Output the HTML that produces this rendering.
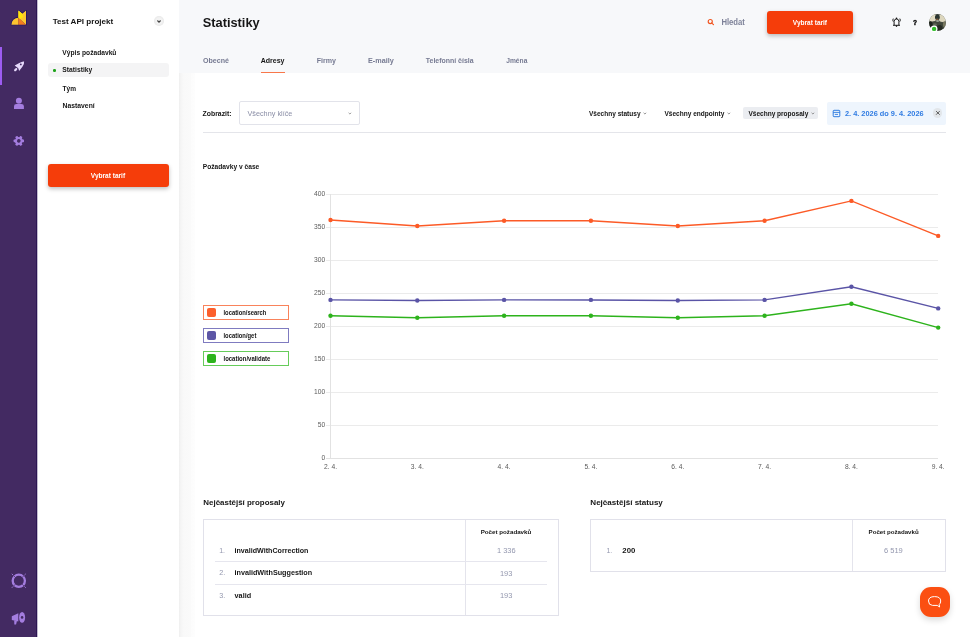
<!DOCTYPE html>
<html><head><meta charset="utf-8">
<style>
*{box-sizing:border-box;margin:0;padding:0}
html,body{width:970px;height:637px;overflow:hidden;background:#fff;font-family:"Liberation Sans",sans-serif;color:#111}
.a{position:absolute;white-space:nowrap;line-height:1}
#sb{position:absolute;left:0;top:0;width:37px;height:637px;background:#432a62}
#panel{position:absolute;left:37px;top:0;width:142px;height:637px;background:#fff}
#hdr{position:absolute;left:179px;top:0;width:791px;height:73px;background:#f7f8fa}
#main{position:absolute;left:179px;top:73px;width:791px;height:564px;background:#fff}
#shd{position:absolute;left:179px;top:73px;width:16px;height:564px;background:linear-gradient(to right,#eeeeee 0,#f3f3f3 6%,#f7f7f7 20%,#f9f9f9 30%,#fafafa 75%,#fcfcfc 76%,#fdfdfd 99%,#fff 100%)}
.chv{position:absolute;width:4px;height:3px}
.leg{position:absolute;left:203px;width:86px;height:14.5px;border:1px solid}
.leg i{position:absolute;left:2.5px;top:2px;width:9px;height:9px;border-radius:2px}
.tbl{position:absolute;border:1px solid #e1e1ea;background:#fff}
</style></head><body>
<div id="sb"></div>
<div id="panel"></div>
<div class="a" style="left:36px;top:0;width:1px;height:637px;background:#2c1553"></div>
<div class="a" style="left:37px;top:0;width:1px;height:637px;background:#c4bccf"></div>
<div id="hdr"></div>
<div id="main"></div>
<div id="shd"></div>

<!-- sidebar -->
<div class="a" style="left:0;top:47px;width:2px;height:38px;background:#9d5cf2"></div>
<svg class="a" style="left:0;top:0" width="37" height="637" viewBox="0 0 37 637">
  <!-- logo -->
  <path d="M11.4 24.7 A7 7 0 0 1 18.4 17.7 L18.4 10.6 L22.3 13.8 L26 10.6 L26 24.7 Z" fill="none" stroke="#1c1160" stroke-width="1.3" stroke-linejoin="round"/>
  <path d="M11.4 24.7 A7 7 0 0 1 18.4 17.7 L18.4 24.7 Z" fill="#fdc430"/>
  <path d="M18.4 17.7 L18.4 10.6 L22.3 13.8 L26 10.6 L26 24.7 Z" fill="#fcc82e"/>
  <path d="M18.4 17.7 L18.4 10.6 L22.3 13.8 L23.2 17 L20 19.2 Z" fill="#ffe60a"/>
  <path d="M18.4 17.7 L26 24.7 L18.4 24.7 Z" fill="#f47d1f"/>
  <!-- rocket -->
  <path d="M14.7 65.5 L19.3 62.9 Q22.6 61 24.1 61.5 Q24.6 63.1 22.4 66.7 L19.1 71 L18.4 68.6 Q17.8 67.8 16.9 67.3 Z" fill="#e6d9fb"/>
  <ellipse cx="15.7" cy="69.6" rx="2" ry="1.15" transform="rotate(-45 15.7 69.6)" fill="#e6d9fb"/>
  <circle cx="20.8" cy="64.4" r="0.95" fill="#432a62"/>
  <!-- person -->
  <circle cx="18.9" cy="100.7" r="3" fill="#a47ddf"/>
  <path d="M14 108.9 L14 106.2 Q14 104 16.5 104 L21.4 104 Q23.9 104 23.9 106.2 L23.9 108.9 Z" fill="#a47ddf"/>
  <!-- gear -->
  <g transform="translate(18.8 140.9) rotate(30)" fill="#a47ddf">
    <circle r="3.8"/>
    <rect x="-1.3" y="-5.2" width="2.6" height="10.4" rx="0.6"/>
    <rect x="-1.3" y="-5.2" width="2.6" height="10.4" rx="0.6" transform="rotate(60)"/>
    <rect x="-1.3" y="-5.2" width="2.6" height="10.4" rx="0.6" transform="rotate(120)"/>
    <circle r="1.8" fill="#432a62"/>
  </g>
  <!-- lifebuoy -->
  <g transform="translate(18.8 580.8)">
    <circle r="6.1" fill="none" stroke="#a47ddf" stroke-width="2.3"/>
    <path d="M-5.9 -5.9 L-3.3 -3.3 M5.9 -5.9 L3.3 -3.3 M-5.9 5.9 L-3.3 3.3 M5.9 5.9 L3.3 3.3" stroke="#432a62" stroke-width="0.7"/>
    <path d="M-7 -7 L-5.6 -5.6 M7 -7 L5.6 -5.6 M-7 7 L-5.6 5.6 M7 7 L5.6 5.6" stroke="#a47ddf" stroke-width="0.9"/>
  </g>
  <!-- megaphone -->
  <g transform="translate(18.8 618.4)" fill="#a47ddf">
    <path d="M-7 -2.2 L-0.5 -5.2 L-0.5 3.2 L-7 1.6 Z"/>
    <ellipse cx="3.3" cy="-1" rx="3" ry="5.4"/>
    <circle cx="3.3" cy="-1" r="1.3" fill="#432a62"/>
    <path d="M-4.6 1.9 L-1.9 2.7 L-2.7 6.1 L-4.5 6.1 Z"/>
  </g>
</svg>

<!-- panel -->
<div class="a" style="left:154px;top:16.4px;width:10px;height:10px;border-radius:50%;background:radial-gradient(circle,#f4f4f4 0,#f2f2f2 45%,#e6e6e6 75%,#ececec 100%)"></div>
<svg class="chv" style="left:157px;top:20px" viewBox="0 0 4 3"><path d="M0.4 0.5 L2 2.2 L3.6 0.5" fill="none" stroke="#444" stroke-width="1.1"/></svg>
<div class="a" style="left:48px;top:63px;width:121px;height:14px;background:#f4f4f5;border-radius:3px"></div>
<div class="a" style="left:53.3px;top:69px;width:2.6px;height:2.6px;border-radius:50%;background:#1da319"></div>
<div class="a" style="left:48px;top:164px;width:121px;height:23px;background:#f53d0a;border-radius:3px;box-shadow:0 2px 4px rgba(0,0,0,.25)"></div>

<!-- header -->
<div class="a" style="left:261px;top:71.5px;width:24px;height:1.5px;background:#f8774a"></div>
<svg class="a" style="left:706px;top:18px" width="9" height="9" viewBox="0 0 9 9"><circle cx="4.25" cy="3.5" r="2.05" fill="none" stroke="#f0541f" stroke-width="1.15"/><path d="M5.8 5.1 L7.5 6.6" stroke="#f0541f" stroke-width="1.15" stroke-linecap="round"/></svg>
<div class="a" style="left:767px;top:11px;width:86px;height:23px;background:#f53d0a;border-radius:3px;box-shadow:0 2px 4px rgba(0,0,0,.25)"></div>
<svg class="a" style="left:890px;top:16px" width="12" height="12" viewBox="0 0 12 12"><path d="M4.1 9.2 L4.1 5.6 Q4.1 3.1 6.5 2.9 Q8.9 3.1 8.9 5.6 L8.9 9.2 M3 9.3 L10 9.3 M3.3 2.6 Q2.3 4.1 3.3 5.6 M9.8 2.6 Q10.8 4.1 9.8 5.6" fill="none" stroke="#111" stroke-width="0.95"/><circle cx="6.5" cy="2.4" r="0.8" fill="#111"/><circle cx="6.5" cy="10.1" r="0.8" fill="#111"/></svg>
<svg class="a" style="left:926px;top:12px" width="22" height="22" viewBox="0 0 22 22"><defs><clipPath id="av"><circle cx="11.5" cy="10.4" r="8.45"/></clipPath><filter id="bl" x="-20%" y="-20%" width="140%" height="140%"><feGaussianBlur stdDeviation="0.7"/></filter></defs>
<g clip-path="url(#av)"><rect x="0" y="0" width="22" height="22" fill="#4b5146"/>
<g filter="url(#bl)"><ellipse cx="6.5" cy="5.5" rx="4.5" ry="4" fill="#e2dcc4"/><ellipse cx="16.5" cy="6" rx="4" ry="4" fill="#dcd6bd"/>
<ellipse cx="11.4" cy="5.2" rx="2.4" ry="2.8" fill="#2c3631"/><ellipse cx="11.2" cy="7.6" rx="1.4" ry="1" fill="#7a5a3c"/><ellipse cx="11.5" cy="9" rx="1.6" ry="0.9" fill="#9aa396"/>
<path d="M2 11 L8 9.5 L15 10.5 L21 12 L21 22 L2 22 Z" fill="#3f463b"/><ellipse cx="4.5" cy="13.5" rx="2.2" ry="4" fill="#1e221e"/><ellipse cx="13.5" cy="17" rx="3" ry="4" fill="#262a24"/><ellipse cx="18.5" cy="12.5" rx="1.6" ry="3" fill="#77775e"/><ellipse cx="9" cy="12.5" rx="2" ry="1.2" fill="#5e6656"/></g></g>
<circle cx="8.1" cy="16.9" r="3.4" fill="#fff"/><circle cx="8.1" cy="16.9" r="2.2" fill="#2fbd2a"/></svg>

<!-- filter row -->
<div class="a" style="left:239px;top:101px;width:121px;height:24px;border:1px solid #e2e3ea;border-radius:2px;background:#fff"></div>
<svg class="chv" style="left:347.8px;top:111.8px" viewBox="0 0 4 3"><path d="M0.6 0.8 L1.9 2 L3.2 0.8" fill="none" stroke="#888" stroke-width="0.8"/></svg>
<svg class="chv" style="left:643.2px;top:111.8px" viewBox="0 0 4 3"><path d="M0.6 0.8 L1.9 2 L3.2 0.8" fill="none" stroke="#777" stroke-width="0.8"/></svg>
<svg class="chv" style="left:726.9px;top:111.8px" viewBox="0 0 4 3"><path d="M0.6 0.8 L1.9 2 L3.2 0.8" fill="none" stroke="#777" stroke-width="0.8"/></svg>
<div class="a" style="left:743px;top:107px;width:75px;height:12px;background:#ebedf1;border-radius:2px"></div>
<svg class="chv" style="left:810.6px;top:111.8px" viewBox="0 0 4 3"><path d="M0.6 0.8 L1.9 2 L3.2 0.8" fill="none" stroke="#777" stroke-width="0.8"/></svg>
<div class="a" style="left:826.5px;top:102px;width:119.5px;height:22.5px;background:#eef5fd;border-radius:2px"></div>
<svg class="a" style="left:832px;top:109px" width="9" height="9" viewBox="0 0 9 9"><rect x="1.2" y="1.3" width="6.6" height="6.4" rx="0.8" fill="none" stroke="#2f7ce0" stroke-width="1"/><path d="M1.2 3.4 L7.8 3.4 M2.8 5.4 L6 5.4" stroke="#2f7ce0" stroke-width="0.9"/></svg>
<div class="a" style="left:932.7px;top:108.3px;width:9.8px;height:9.8px;border-radius:50%;background:#e2e6ea"></div>
<svg class="a" style="left:932.7px;top:108.3px" width="10" height="10" viewBox="0 0 10 10"><path d="M3.1 3.1 L6.7 6.7 M6.7 3.1 L3.1 6.7" stroke="#3a3a3a" stroke-width="0.8"/></svg>
<div class="a" style="left:203px;top:132px;width:743px;height:1px;background:#e4e5ea"></div>

<!-- legend -->
<div class="leg" style="top:305px;border-color:#f9835b"><i style="background:#fc5f2c"></i></div>
<div class="leg" style="top:328px;border-color:#7f7bc0"><i style="background:#5d56a6"></i></div>
<div class="leg" style="top:351px;border-color:#66cc5a"><i style="background:#2db31d"></i></div>

<svg class="a" style="left:0;top:0;will-change:transform" width="970" height="637" viewBox="0 0 970 637">
  <g stroke="#ebebeb" stroke-width="1">
    <path d="M326 194.5 H938 M326 227.5 H938 M326 260.5 H938 M326 293.5 H938 M326 326.5 H938 M326 359.5 H938 M326 392.5 H938 M326 425.5 H938"/>
  </g>
  <path d="M326 458.5 H938 M330.5 194 V458.5" stroke="#e2e2e2" stroke-width="1"/>
  <g font-family="Liberation Sans" font-size="6.7" fill="#5a5a5a" text-anchor="end">
    <text x="325.2" y="196.4">400</text><text x="325.2" y="229.4">350</text><text x="325.2" y="262.4">300</text><text x="325.2" y="295.4">250</text><text x="325.2" y="328.4">200</text><text x="325.2" y="361.4">150</text><text x="325.2" y="394.4">100</text><text x="325.2" y="427.4">50</text><text x="325.2" y="460.4">0</text>
  </g>
  <g font-family="Liberation Sans" font-size="6.7" fill="#5a5a5a" text-anchor="middle">
    <text x="330.5" y="468.8">2. 4.</text><text x="417.3" y="468.8">3. 4.</text><text x="504.1" y="468.8">4. 4.</text><text x="590.9" y="468.8">5. 4.</text><text x="677.8" y="468.8">6. 4.</text><text x="764.6" y="468.8">7. 4.</text><text x="851.4" y="468.8">8. 4.</text><text x="938.2" y="468.8">9. 4.</text>
  </g>
  <polyline fill="none" stroke="#fc5a26" stroke-width="1.45" points="330.5,220.0 417.3,226.0 504.1,220.7 590.9,220.7 677.8,226.0 764.6,220.7 851.4,200.9 938.2,235.9"/>
  <polyline fill="none" stroke="#5a54a6" stroke-width="1.45" points="330.5,299.9 417.3,300.5 504.1,299.9 590.9,299.9 677.8,300.5 764.6,299.9 851.4,286.7 938.2,308.4"/>
  <polyline fill="none" stroke="#2db31c" stroke-width="1.45" points="330.5,315.7 417.3,317.7 504.1,315.7 590.9,315.7 677.8,317.7 764.6,315.7 851.4,303.8 938.2,327.6"/>
  <g fill="#fc5a26"><circle cx="330.5" cy="220.0" r="2.2"/><circle cx="417.3" cy="226.0" r="2.2"/><circle cx="504.1" cy="220.7" r="2.2"/><circle cx="590.9" cy="220.7" r="2.2"/><circle cx="677.8" cy="226.0" r="2.2"/><circle cx="764.6" cy="220.7" r="2.2"/><circle cx="851.4" cy="200.9" r="2.2"/><circle cx="938.2" cy="235.9" r="2.2"/></g>
  <g fill="#5a54a6"><circle cx="330.5" cy="299.9" r="2.2"/><circle cx="417.3" cy="300.5" r="2.2"/><circle cx="504.1" cy="299.9" r="2.2"/><circle cx="590.9" cy="299.9" r="2.2"/><circle cx="677.8" cy="300.5" r="2.2"/><circle cx="764.6" cy="299.9" r="2.2"/><circle cx="851.4" cy="286.7" r="2.2"/><circle cx="938.2" cy="308.4" r="2.2"/></g>
  <g fill="#2db31c"><circle cx="330.5" cy="315.7" r="2.2"/><circle cx="417.3" cy="317.7" r="2.2"/><circle cx="504.1" cy="315.7" r="2.2"/><circle cx="590.9" cy="315.7" r="2.2"/><circle cx="677.8" cy="317.7" r="2.2"/><circle cx="764.6" cy="315.7" r="2.2"/><circle cx="851.4" cy="303.8" r="2.2"/><circle cx="938.2" cy="327.6" r="2.2"/></g>
</svg>

<!-- tables -->
<div class="tbl" style="left:203px;top:519px;width:356px;height:97px"></div>
<div class="a" style="left:465px;top:520px;width:1px;height:95px;background:#e4e4ec"></div>
<div class="a" style="left:215px;top:561px;width:332px;height:1px;background:#e6e6ee"></div>
<div class="a" style="left:215px;top:584px;width:332px;height:1px;background:#e6e6ee"></div>
<div class="tbl" style="left:590px;top:519px;width:356px;height:53px"></div>
<div class="a" style="left:852px;top:520px;width:1px;height:51px;background:#e4e4ec"></div>

<!-- chat button -->
<div class="a" style="left:919.5px;top:586.5px;width:30.5px;height:30.5px;border-radius:11px;background:#fb4f12;box-shadow:0 3px 6px rgba(0,0,0,.15)"></div>
<svg class="a" style="left:926px;top:593px" width="18" height="18" viewBox="0 0 18 18"><path d="M6.5 12.4 Q2.5 12.2 2.5 8 Q2.5 3.6 8.6 3.6 Q14.7 3.6 14.7 8 Q14.7 10.4 13.2 11.5 L13.6 14 L11.2 12.4 Z" fill="none" stroke="#fff" stroke-width="1" stroke-linejoin="round"/></svg>

<svg class="a" style="left:0;top:0" width="970" height="637" viewBox="0 0 970 637" font-family="Liberation Sans">
<text x="52.65" y="24.10" font-size="8.0" font-weight="bold" fill="#151515" textLength="60.65" lengthAdjust="spacingAndGlyphs">Test API projekt</text>
<text x="62.38" y="54.80" font-size="6.5" font-weight="bold" fill="#151515" textLength="54.05" lengthAdjust="spacingAndGlyphs">Výpis požadavků</text>
<text x="62.38" y="72.00" font-size="6.5" font-weight="bold" fill="#151515" textLength="29.85" lengthAdjust="spacingAndGlyphs">Statistiky</text>
<text x="62.57" y="90.60" font-size="6.5" font-weight="bold" fill="#151515" textLength="13.45" lengthAdjust="spacingAndGlyphs">Tým</text>
<text x="62.57" y="107.90" font-size="6.5" font-weight="bold" fill="#151515" textLength="32.15" lengthAdjust="spacingAndGlyphs">Nastavení</text>
<text x="90.77" y="177.80" font-size="6.6" font-weight="bold" fill="#ffffff" textLength="34.36" lengthAdjust="spacingAndGlyphs">Vybrat tarif</text>
<text x="202.75" y="27.00" font-size="13.0" font-weight="bold" fill="#151515" textLength="56.90" lengthAdjust="spacingAndGlyphs">Statistiky</text>
<text x="203.02" y="63.40" font-size="7.6" font-weight="bold" fill="#767a92" textLength="25.96" lengthAdjust="spacingAndGlyphs">Obecné</text>
<text x="260.72" y="63.40" font-size="7.6" font-weight="bold" fill="#161616" textLength="23.76" lengthAdjust="spacingAndGlyphs">Adresy</text>
<text x="316.72" y="63.40" font-size="7.6" font-weight="bold" fill="#767a92" textLength="19.26" lengthAdjust="spacingAndGlyphs">Firmy</text>
<text x="368.02" y="63.40" font-size="7.6" font-weight="bold" fill="#767a92" textLength="25.76" lengthAdjust="spacingAndGlyphs">E-maily</text>
<text x="425.82" y="63.40" font-size="7.6" font-weight="bold" fill="#767a92" textLength="47.76" lengthAdjust="spacingAndGlyphs">Telefonní čísla</text>
<text x="506.22" y="63.40" font-size="7.6" font-weight="bold" fill="#767a92" textLength="21.16" lengthAdjust="spacingAndGlyphs">Jména</text>
<text x="721.39" y="25.00" font-size="8.2" font-weight="bold" fill="#7e8299" textLength="23.52" lengthAdjust="spacingAndGlyphs">Hledat</text>
<text x="792.84" y="24.80" font-size="7.2" font-weight="bold" fill="#ffffff" textLength="34.22" lengthAdjust="spacingAndGlyphs">Vybrat tarif</text>
<text x="913.10" y="24.80" font-size="8.0" font-weight="bold" fill="#000" textLength="4.10" lengthAdjust="spacingAndGlyphs" stroke="#000" stroke-width="0.35">?</text>
<text x="202.54" y="115.70" font-size="7.2" font-weight="bold" fill="#151515" textLength="29.02" lengthAdjust="spacingAndGlyphs">Zobrazit:</text>
<text x="247.44" y="116.00" font-size="7.2" font-weight="normal" fill="#8a8ea6" textLength="44.92" lengthAdjust="spacingAndGlyphs">Všechny klíče</text>
<text x="588.93" y="116.20" font-size="7.4" font-weight="bold" fill="#151515" textLength="51.64" lengthAdjust="spacingAndGlyphs">Všechny statusy</text>
<text x="664.53" y="116.20" font-size="7.4" font-weight="bold" fill="#151515" textLength="59.74" lengthAdjust="spacingAndGlyphs">Všechny endpointy</text>
<text x="748.43" y="116.20" font-size="7.4" font-weight="bold" fill="#151515" textLength="59.84" lengthAdjust="spacingAndGlyphs">Všechny proposaly</text>
<text x="845.00" y="116.00" font-size="8.1" font-weight="bold" fill="#2f7be2" textLength="78.61" lengthAdjust="spacingAndGlyphs">2. 4. 2026 do 9. 4. 2026</text>
<text x="202.78" y="168.70" font-size="6.5" font-weight="bold" fill="#151515" textLength="56.55" lengthAdjust="spacingAndGlyphs">Požadavky v čase</text>
<text x="223.47" y="314.60" font-size="6.6" font-weight="bold" fill="#151515" textLength="42.86" lengthAdjust="spacingAndGlyphs">location/search</text>
<text x="223.47" y="337.80" font-size="6.6" font-weight="bold" fill="#151515" textLength="32.86" lengthAdjust="spacingAndGlyphs">location/get</text>
<text x="223.47" y="360.80" font-size="6.6" font-weight="bold" fill="#151515" textLength="46.86" lengthAdjust="spacingAndGlyphs">location/validate</text>
<text x="203.34" y="505.10" font-size="7.2" font-weight="bold" fill="#151515" textLength="81.62" lengthAdjust="spacingAndGlyphs">Nejčastější proposaly</text>
<text x="590.34" y="505.10" font-size="7.2" font-weight="bold" fill="#151515" textLength="72.52" lengthAdjust="spacingAndGlyphs">Nejčastější statusy</text>
<text x="480.70" y="533.60" font-size="6.0" font-weight="bold" fill="#151515" textLength="50.60" lengthAdjust="spacingAndGlyphs">Počet požadavků</text>
<text x="868.60" y="533.60" font-size="6.0" font-weight="bold" fill="#151515" textLength="50.10" lengthAdjust="spacingAndGlyphs">Počet požadavků</text>
<text x="219.25" y="553.00" font-size="7.0" font-weight="normal" fill="#9397ae" textLength="5.80" lengthAdjust="spacingAndGlyphs">1.</text>
<text x="234.55" y="553.00" font-size="7.0" font-weight="bold" fill="#151515" textLength="73.90" lengthAdjust="spacingAndGlyphs">invalidWithCorrection</text>
<text x="497.05" y="552.80" font-size="6.9" font-weight="normal" fill="#9397ae" textLength="18.59" lengthAdjust="spacingAndGlyphs">1 336</text>
<text x="219.25" y="575.40" font-size="7.0" font-weight="normal" fill="#9397ae" textLength="6.00" lengthAdjust="spacingAndGlyphs">2.</text>
<text x="234.55" y="575.40" font-size="7.0" font-weight="bold" fill="#151515" textLength="77.60" lengthAdjust="spacingAndGlyphs">invalidWithSuggestion</text>
<text x="499.91" y="575.70" font-size="7.8" font-weight="normal" fill="#9397ae" textLength="12.48" lengthAdjust="spacingAndGlyphs">193</text>
<text x="219.25" y="597.50" font-size="7.0" font-weight="normal" fill="#9397ae" textLength="6.00" lengthAdjust="spacingAndGlyphs">3.</text>
<text x="234.55" y="597.50" font-size="7.0" font-weight="bold" fill="#151515" textLength="16.60" lengthAdjust="spacingAndGlyphs">valid</text>
<text x="499.91" y="597.80" font-size="7.8" font-weight="normal" fill="#9397ae" textLength="12.48" lengthAdjust="spacingAndGlyphs">193</text>
<text x="606.45" y="553.00" font-size="7.0" font-weight="normal" fill="#9397ae" textLength="5.80" lengthAdjust="spacingAndGlyphs">1.</text>
<text x="622.35" y="553.00" font-size="7.0" font-weight="bold" fill="#151515" textLength="13.00" lengthAdjust="spacingAndGlyphs">200</text>
<text x="883.95" y="552.80" font-size="6.9" font-weight="normal" fill="#9397ae" textLength="18.89" lengthAdjust="spacingAndGlyphs">6 519</text>
</svg>
</body></html>
